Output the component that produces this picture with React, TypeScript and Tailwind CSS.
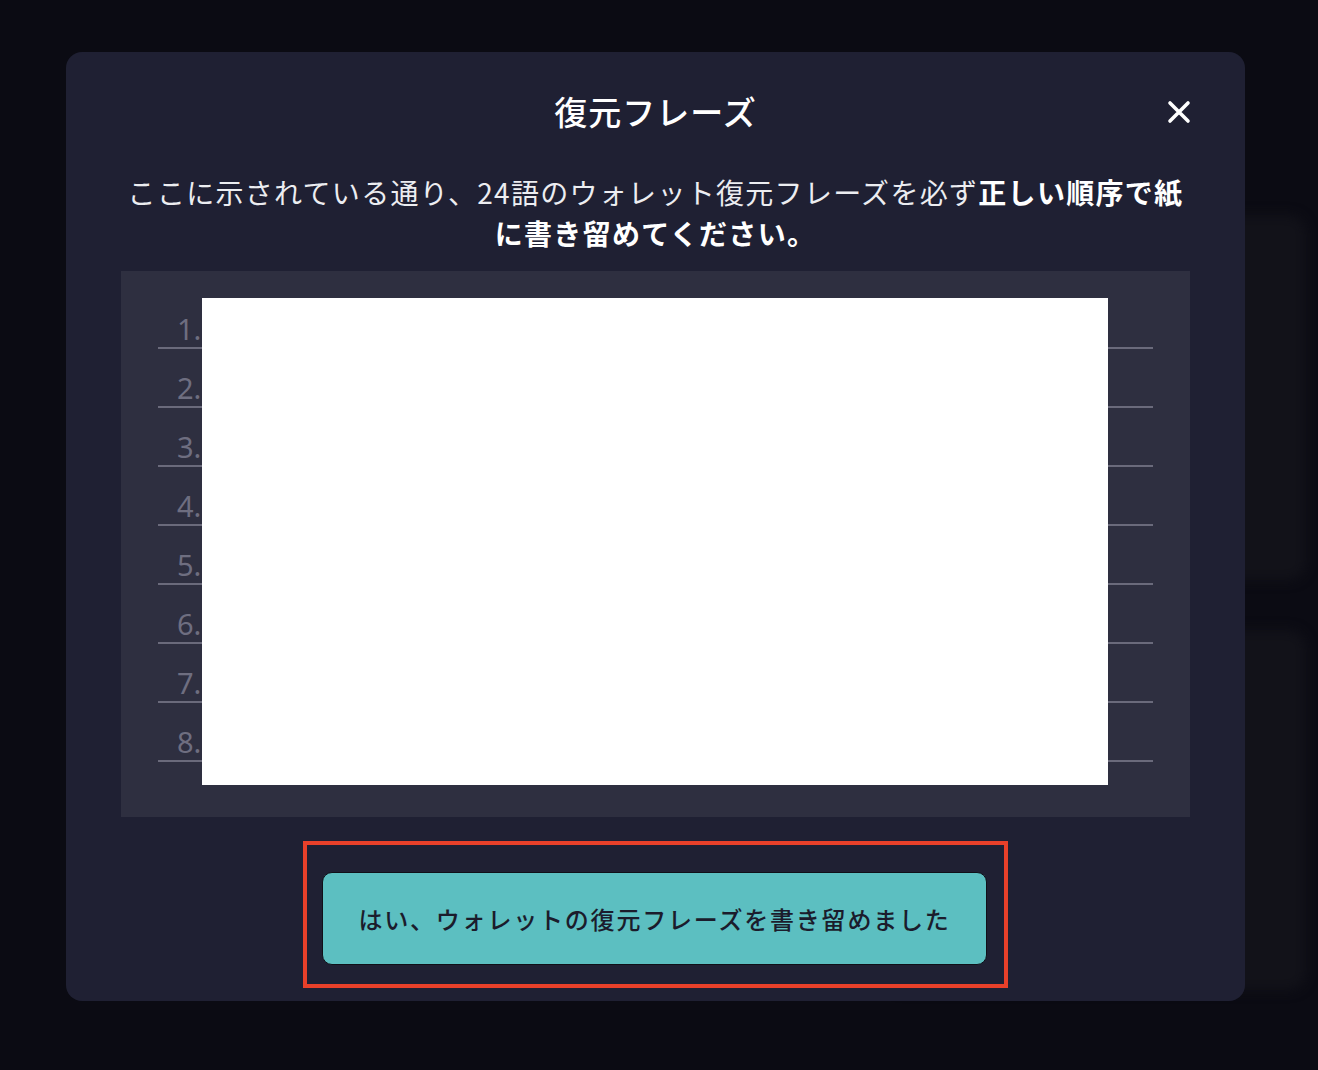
const rows = [1, 2, 3, 4, 5, 6, 7, 8]

function CloseIcon() {
  return (
    <svg width="24" height="24" viewBox="0 0 24 24" fill="none">
      <path d="M3 3L21 21M21 3L3 21" stroke="#ffffff" strokeWidth="3.6" strokeLinecap="round" />
    </svg>
  )
}

function PhraseRow({ n }: { n: number }) {
  return (
    <div className="flex h-[59px] items-end border-b-2 border-[#6a6a7b] pb-[4px] pl-[19px]">
      <span className="text-[29px] leading-none text-[#6e6e80]" style={{ fontFamily: '"Noto Sans", sans-serif' }}>
        {n}.
      </span>
    </div>
  )
}

export default function App() {
  return (
    <div
      className="relative h-[1070px] w-full overflow-hidden bg-[#0b0b13]"
      style={{ fontFamily: '"Noto Sans CJK JP", "Noto Sans", sans-serif' }}
    >
      {/* page behind the dialog */}
      <div className="flex flex-col items-end gap-[50px] pt-[215px] pr-[12px] blur-[6px]">
        <div className="h-[365px] w-[420px] rounded-[18px] bg-[#121219]" />
        <div className="h-[360px] w-[420px] rounded-[18px] bg-[#121219]" />
      </div>

      {/* dialog */}
      <div className="absolute left-[66px] top-[52px] flex h-[949px] w-[1179px] flex-col items-center rounded-[16px] bg-[#1f2033]">
        <div className="relative w-full pt-[34px] text-center">
          <h2 className="text-[33px] font-medium leading-[50px] tracking-[1px] text-white">復元フレーズ</h2>
          <button className="absolute right-[54px] top-[48px]">
            <CloseIcon />
          </button>
        </div>

        <p className="mt-[36px] whitespace-nowrap text-center text-[28px] leading-[41px] tracking-[1.3px] text-[#ecedf1]">
          ここに示されている通り、24語のウォレット復元フレーズを必ず
          <span className="font-bold text-white">正しい順序で紙</span>
          <br />
          <span className="font-bold text-white">に書き留めてください。</span>
        </p>

        <div className="relative mt-[17px] h-[546px] w-[1069px] bg-[#2e2f40] px-[37px] pt-[19px]">
          {rows.map((n) => (
            <PhraseRow key={n} n={n} />
          ))}
          {/* covers the words */}
          <div className="absolute left-[81px] top-[27px] h-[487px] w-[906px] bg-white" />
        </div>

        <div className="mt-[24px] border-[4px] border-[#e8402a] pb-[19px] pl-[15px] pr-[17px] pt-[27px]">
          <button className="flex h-[93px] w-[665px] items-center justify-center rounded-[10px] border border-[#101018] bg-[#5cbfc1] text-[24px] font-medium tracking-[1.8px] text-[#1b1c2c]">
            はい、ウォレットの復元フレーズを書き留めました
          </button>
        </div>
      </div>
    </div>
  )
}
